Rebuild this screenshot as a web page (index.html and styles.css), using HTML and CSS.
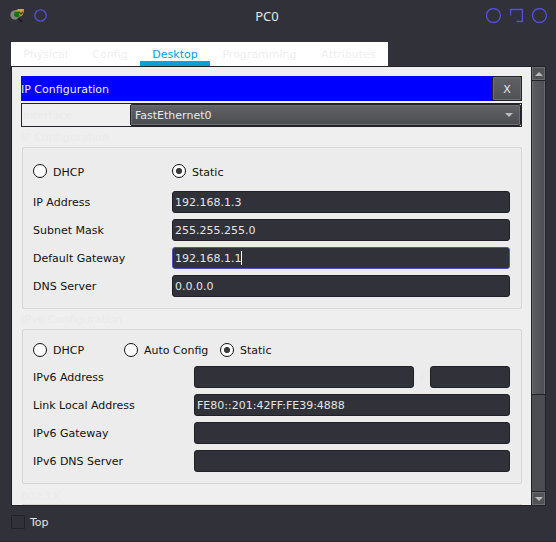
FILE: index.html
```html
<!DOCTYPE html>
<html lang="en">
<head>
<meta charset="utf-8">
<title>PC0</title>
<link rel="stylesheet" href="styles.css">
</head>
<body>
<div class="window">
  <header class="titlebar">
    <svg class="app-icon" width="16" height="16" viewBox="0 0 16 16">
      <circle cx="5" cy="7" r="4.7" fill="#858585"/>
      <path d="M5 3 8 1h6v3l-2 4-5 1z" fill="#b59142"/>
      <path d="M8 2h5M7 4l5 2" stroke="#e2bb68" stroke-width="1.2"/>
      <path d="m9 4 2 2 2-2" stroke="#58451f" fill="none"/>
      <path d="M4.5 4 9 3.5 9.5 8 7 9.5 4 8z" fill="#087a08"/>
      <path d="m8 10 4 4" stroke="#17171b" stroke-width="1.4"/>
    </svg>
    <svg class="pin" width="14" height="14" viewBox="0 0 14 14"><circle cx="6.5" cy="6.5" r="5.7"/></svg>
    <h1 class="title">PC0</h1>
    <div class="controls">
      <svg width="16" height="16" viewBox="0 0 16 16"><circle cx="7.5" cy="7.5" r="7"/></svg>
      <svg width="16" height="16" viewBox="0 0 16 16"><path d="M1.6 7.5v-6h11.8v12H7.5"/></svg>
      <svg width="16" height="16" viewBox="0 0 16 16"><circle cx="7.5" cy="7.5" r="7"/></svg>
    </div>
  </header>

  <nav class="tabs">
    <span class="tab">Physical</span>
    <span class="tab">Config</span>
    <span class="tab active">Desktop</span>
    <span class="tab">Programming</span>
    <span class="tab">Attributes</span>
  </nav>

  <main class="pane">
    <div class="content">
      <div class="banner"><span>IP Configuration</span><button class="close">X</button></div>
      <div class="interface">
        <span class="ghost">Interface</span>
        <div class="combo"><span>FastEthernet0</span><i class="arrow down"></i></div>
      </div>

      <div class="caption">IP Configuration</div>
      <section class="group v4">
        <div class="radios">
          <label class="radio"><i></i><span>DHCP</span></label>
          <label class="radio on"><i></i><span>Static</span></label>
        </div>
        <div class="row"><span>IP Address</span><div class="field">192.168.1.3</div></div>
        <div class="row"><span>Subnet Mask</span><div class="field">255.255.255.0</div></div>
        <div class="row"><span>Default Gateway</span><div class="field focus">192.168.1.1<b class="caret"></b></div></div>
        <div class="row"><span>DNS Server</span><div class="field">0.0.0.0</div></div>
      </section>

      <div class="caption">IPv6 Configuration</div>
      <section class="group v6">
        <div class="radios">
          <label class="radio"><i></i><span>DHCP</span></label>
          <label class="radio"><i></i><span>Auto Config</span></label>
          <label class="radio on"><i></i><span>Static</span></label>
        </div>
        <div class="row split"><span>IPv6 Address</span><div class="field"></div><span class="slash">/</span><div class="field"></div></div>
        <div class="row"><span>Link Local Address</span><div class="field">FE80::201:42FF:FE39:4888</div></div>
        <div class="row"><span>IPv6 Gateway</span><div class="field"></div></div>
        <div class="row"><span>IPv6 DNS Server</span><div class="field"></div></div>
      </section>

      <div class="caption last">802.1X</div>
      <section class="group"></section>
    </div>
    <div class="scrollbar">
      <div class="step"><i class="arrow up"></i></div>
      <div class="thumb"></div>
      <div class="groove"></div>
      <div class="step"><i class="arrow down"></i></div>
    </div>
  </main>

  <footer class="footer"><i class="check"></i><span>Top</span></footer>
</div>
</body>
</html>
```
FILE: styles.css
```css
* { box-sizing: border-box; }
body {
  margin: 0;
  background: #31313a;
  color: #111;
  font: 11px/14px "DejaVu Sans", sans-serif;
}
.window {
  width: 556px;
  height: 542px;
  padding: 0 10px 0 11px;
  overflow: hidden;
  display: flex;
  flex-direction: column;
  border-bottom: 1px solid #26262d;
}

.titlebar {
  height: 42px;
  flex: none;
  display: grid;
  grid-template-columns: 23px 198px 70px 1fr;
  align-items: start;
}
.titlebar svg { fill: none; stroke: #5350dc; stroke-width: 1.3; }
.titlebar .app-icon { margin: 8px 0 0 -1px; stroke: none; }
.pin { margin-top: 9px; }
.title {
  margin: 7px 0 0;
  font: 13px/18px "Noto Sans", sans-serif;
  text-align: center;
  color: #e6e6e6;
}
.controls { display: flex; justify-content: flex-end; gap: 7px; margin: 8px -2px 0 0; }

.tabs {
  width: 377px;
  height: 24px;
  flex: none;
  display: grid;
  grid-template-columns: 69px 60px 70px 99px 79px;
  background: #fff;
  color: #efefef;
}
.tab { padding-top: 6px; text-align: center; }
.tab.active { color: #08a0d9; box-shadow: inset 0 -5px #08a0d9; }

.pane {
  height: 440px;
  flex: none;
  display: flex;
  background: #efefef;
  border: 1px solid #222228;
}
.content {
  width: 519px;
  height: 438px;
  padding: 9px 9px 0;
  overflow: hidden;
}
.banner {
  height: 25px;
  display: flex;
  align-items: center;
  justify-content: space-between;
  background: #00f;
  color: #eee;
}
.banner span, .ghost, .combo span, .radio span, .row > span, .footer span { padding-top: 2px; }
.close {
  width: 30px;
  height: 25px;
  padding: 2px 0 0;
  border: 1px solid #222228;
  border-radius: 2px;
  box-shadow: inset 0 0 0 1px #6d6e72;
  background: linear-gradient(#606165, #505155);
  color: #e8e8e8;
  font: inherit;
}
.interface {
  height: 24px;
  margin-top: 2px;
  display: grid;
  grid-template-columns: 108px 1fr;
  align-items: center;
  border: 1px solid #222228;
}
.ghost { color: #ebebeb; padding-left: 1px; }
.combo {
  height: 22px;
  display: flex;
  align-items: center;
  justify-content: space-between;
  padding: 0 7px 0 4px;
  border: 1px solid #222228;
  border-radius: 2px;
  box-shadow: inset 0 0 0 1px #6d6e72;
  background: linear-gradient(#626367, #4b4c50);
  color: #e8e8e8;
}
.arrow { width: 0; height: 0; border: 4px solid transparent; }
.arrow.down { border-top-color: #bbb; border-bottom: 0; }
.arrow.up { border-bottom-color: #bbb; border-top: 0; }

.caption { height: 20px; padding-top: 4px; color: #ebebeb; }
.caption.last { padding-top: 6px; }
.group {
  margin-left: 1px;
  width: 500px;
  padding: 0 11px 0 10px;
  background: #ececec;
  border: 1px solid #d6d6d6;
  border-radius: 2px;
}
.v4 { height: 162px; }
.v6 { height: 155px; }
.radios { display: grid; }
.v4 .radios { height: 43px; padding-top: 16px; grid-template-columns: 139px 1fr; }
.v6 .radios { height: 36px; padding-top: 13px; grid-template-columns: 91px 96px 1fr; }
.radio { display: flex; align-items: center; height: 14px; gap: 6px; }
.v4 .radio span { padding-top: 4px; }
.v6 .radio span { padding-top: 1px; }
.radio i {
  width: 14px;
  height: 14px;
  flex: none;
  border: 1px solid #111;
  border-radius: 50%;
  background: #fff;
}
.radio.on i { background: radial-gradient(circle, #3a3a3c 2.7px, #fff 3.5px); }
.row {
  height: 22px;
  margin-bottom: 6px;
  display: grid;
  align-items: center;
}
.v4 .row { grid-template-columns: 139px 338px; }
.v6 .row { grid-template-columns: 161px 316px; }
.v6 .row.split { grid-template-columns: 161px 220px 16px 80px; }
.slash { color: #e9e9e9; text-align: center; }
.field {
  height: 22px;
  padding: 4px 2px 2px;
  display: flex;
  background: #31313a;
  border: 1px solid #202027;
  border-radius: 3px;
  color: #e4e4e4;
}
.field.focus { border-color: #4f50c9; }
.caret { width: 1px; height: 14px; margin-top: -1px; background: #fff; }

.scrollbar { width: 14px; flex: none; border-left: 1px solid #222228; display: flex; flex-direction: column; }
.step {
  height: 13px;
  display: flex;
  align-items: center;
  justify-content: center;
  background: #525357;
  border: 1px solid #6d6e72;
}
.thumb {
  height: 315px;
  border: 1px solid #222228;
  border-width: 1px 0;
  background: linear-gradient(90deg, #6d6e72 1px, #5b5c60 1px, #4f5054 12px, #6d6e72 12px);
}
.groove { flex: 1; background: #4c4d51; border-bottom: 1px solid #222228; }

.footer { display: flex; gap: 5px; align-items: center; margin-top: 9px; height: 14px; color: #e4e4e4; }
.check { width: 14px; height: 14px; border: 1px solid #222228; border-radius: 1px; }
```
